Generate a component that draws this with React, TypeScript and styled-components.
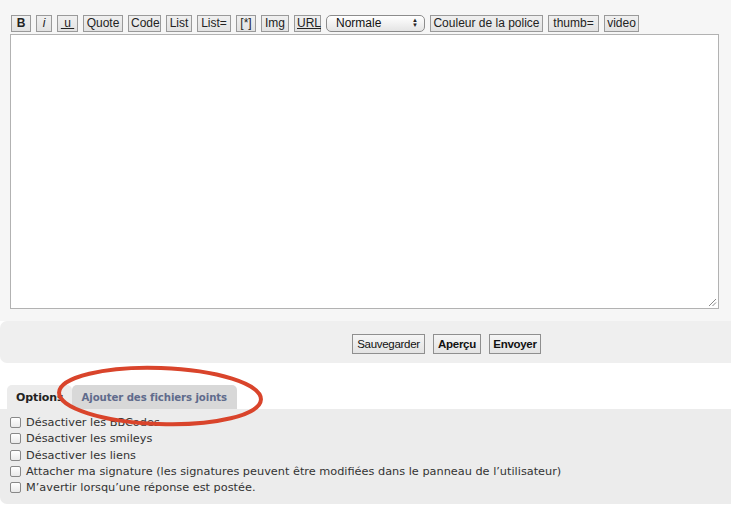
import React from "react";
import styled, { createGlobalStyle } from "styled-components";

const Global = createGlobalStyle`
  html, body { margin: 0; padding: 0; background: #ffffff; }
  body { font-family: "DejaVu Sans", Verdana, sans-serif; }
`;

const Page = styled.div`
  width: 731px;
  position: relative;
`;

const EditorArea = styled.div`
  background: #f6f6f6;
  padding: 14px 12px 12px 10px;
`;

const Toolbar = styled.div`
  display: flex;
  align-items: center;
  gap: 5px;
  padding-left: 1px;
  height: 18px;
`;

const TButton = styled.button<{ $bold?: boolean; $italic?: boolean; $under?: boolean; $w?: number }>`
  height: 17px;
  padding: 0 2px;
  ${(p) => (p.$w ? `width: ${p.$w}px;` : "")}
  margin: 0;
  border: 1px solid #9a9a9a;
  background: linear-gradient(#f0f0f0, #e2e2e2);
  font-family: "Liberation Sans", Arial, sans-serif;
  font-size: 12px;
  line-height: 15px;
  color: #222;
  font-weight: ${(p) => (p.$bold ? 700 : 400)};
  font-style: ${(p) => (p.$italic ? "italic" : "normal")};
  text-decoration: ${(p) => (p.$under ? "underline" : "none")};
  cursor: pointer;
`;

const Select = styled.div`
  width: 99px;
  height: 17px;
  box-sizing: border-box;
  border: 1px solid #8c8c8c;
  border-radius: 5px;
  background: linear-gradient(#ffffff, #e4e4e4);
  display: flex;
  align-items: center;
  justify-content: space-between;
  padding: 0 6px 0 9px;
  font-family: "Liberation Sans", Arial, sans-serif;
  font-size: 12px;
  color: #111;
`;

const Arrows = styled.span`
  display: flex;
  flex-direction: column;
  font-size: 6px;
  line-height: 5px;
  color: #222;
`;

const TextArea = styled.div`
  margin-top: 2px;
  width: 709px;
  height: 275px;
  box-sizing: border-box;
  background: #fff;
  border: 1px solid #b2b2b2;
  position: relative;
`;

const Grip = styled.svg`
  position: absolute;
  right: 1px;
  bottom: 1px;
`;

const SubmitBar = styled.div`
  background: #efefef;
  border-radius: 7px 0 0 7px;
  height: 42px;
  display: flex;
  align-items: center;
  gap: 8px;
  padding-left: 352px;
`;

const SButton = styled.button<{ $bold?: boolean; $w: number }>`
  width: ${(p) => p.$w}px;
  height: 20px;
  padding: 0;
  margin: 0;
  margin-top: 3px;
  border: 1px solid #8f8f8f;
  background: linear-gradient(#f5f5f5, #e3e3e3);
  font-family: "Liberation Sans", Arial, sans-serif;
  font-size: 11.5px;
  letter-spacing: -0.3px;
  color: #111;
  font-weight: ${(p) => (p.$bold ? 700 : 400)};
`;

const Spacer = styled.div`
  height: 22px;
  background: #fff;
`;

const Tabs = styled.div`
  display: flex;
  padding-left: 7px;
  height: 24px;
  align-items: flex-end;
`;

const Tab = styled.div<{ $active?: boolean }>`
  height: 24px;
  box-sizing: border-box;
  padding: ${(p) => (p.$active ? "0 8px 0 9px" : "0 10px")};
  display: flex;
  align-items: center;
  border-radius: 5px 5px 0 0;
  background: ${(p) => (p.$active ? "#ececec" : "#d8d8d8")};
  color: ${(p) => (p.$active ? "#222" : "#5f6b8c")};
  font-family: "DejaVu Sans", Verdana, sans-serif;
  font-weight: 700;
  font-size: ${(p) => (p.$active ? "11px" : "10.2px")};
  letter-spacing: -0.1px;
`;

const OptionsPanel = styled.div`
  background: #ececec;
  border-radius: 0 0 0 7px;
  padding: 5px 10px 8px 10px;
  display: flex;
  flex-direction: column;
  height: 95px;
  box-sizing: border-box;
`;

const Row = styled.label`
  display: flex;
  align-items: center;
  gap: 4px;
  height: 17px;
  font-family: "DejaVu Sans", Verdana, sans-serif;
  font-size: 11.3px;
  color: #333;
`;

const Box = styled.span`
  width: 11px;
  height: 11px;
  box-sizing: border-box;
  border: 1px solid #888;
  border-radius: 2px;
  background: linear-gradient(#ffffff, #e9e9e9);
  flex: none;
  margin-right: 1px;
`;

const Annotation = styled.svg`
  position: absolute;
  left: 0;
  top: 0;
  pointer-events: none;
`;

export default function App() {
  const options = [
    "Désactiver les BBCodes",
    "Désactiver les smileys",
    "Désactiver les liens",
    "Attacher ma signature (les signatures peuvent être modifiées dans le panneau de l’utilisateur)",
    "M’avertir lorsqu’une réponse est postée.",
  ];
  return (
    <Page>
      <Global />
      <EditorArea>
        <Toolbar>
          <TButton $bold $w={20}>B</TButton>
          <TButton $italic $w={16}>i</TButton>
          <TButton $under $w={21}>&nbsp;u&nbsp;</TButton>
          <TButton $w={40}>Quote</TButton>
          <TButton $w={33}>Code</TButton>
          <TButton $w={26}>List</TButton>
          <TButton $w={34}>List=</TButton>
          <TButton $w={20}>[*]</TButton>
          <TButton $w={28}>Img</TButton>
          <TButton $under $w={27}>URL</TButton>
          <Select>
            <span>Normale</span>
            <Arrows>
              <span>▲</span>
              <span>▼</span>
            </Arrows>
          </Select>
          <TButton $w={113}>Couleur de la police</TButton>
          <TButton $w={51}>thumb=</TButton>
          <TButton $w={35}>video</TButton>
        </Toolbar>
        <TextArea>
          <Grip width="9" height="9" viewBox="0 0 9 9">
            <line x1="1" y1="8" x2="8" y2="1" stroke="#888" strokeWidth="1" />
            <line x1="4.5" y1="8" x2="8" y2="4.5" stroke="#888" strokeWidth="1" />
          </Grip>
        </TextArea>
      </EditorArea>
      <SubmitBar>
        <SButton $w={73}>Sauvegarder</SButton>
        <SButton $bold $w={48}>Aperçu</SButton>
        <SButton $bold $w={52}>Envoyer</SButton>
      </SubmitBar>
      <Spacer />
      <Tabs>
        <Tab $active>Options</Tab>
        <Tab>Ajouter des fichiers joints</Tab>
      </Tabs>
      <OptionsPanel>
        {options.map((o) => (
          <Row key={o}>
            <Box />
            {o}
          </Row>
        ))}
      </OptionsPanel>
      <Annotation width="731" height="507">
        <ellipse cx="160" cy="396" rx="101" ry="28" fill="none" stroke="#d9442b" strokeWidth="4" transform="rotate(2 160 396)" />
      </Annotation>
    </Page>
  );
}
